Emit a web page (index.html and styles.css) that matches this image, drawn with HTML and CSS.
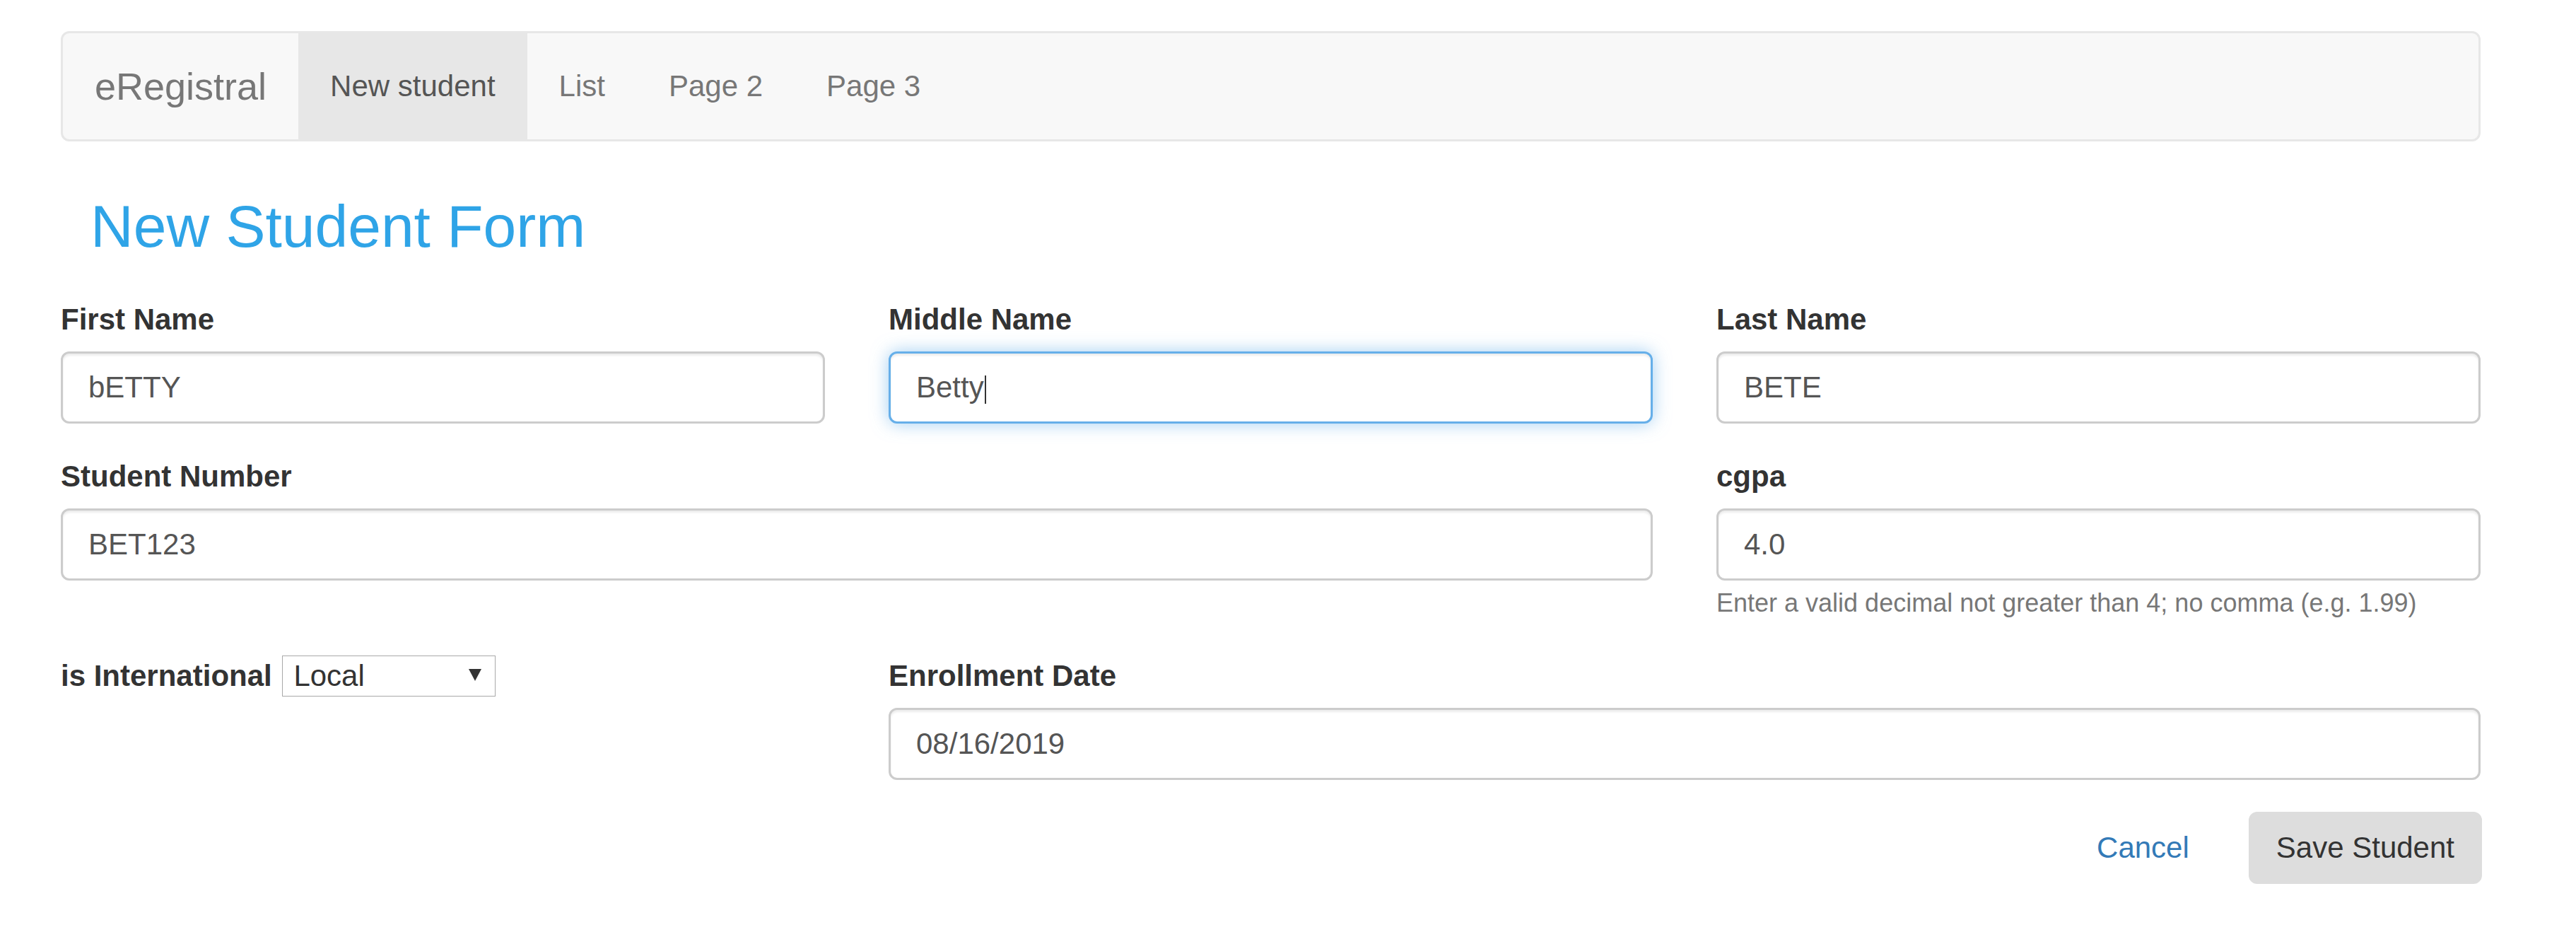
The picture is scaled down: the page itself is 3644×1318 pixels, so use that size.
FILE: index.html
```html
<!DOCTYPE html>
<html lang="en">
<head>
<meta charset="utf-8">
<title>eRegistral - New Student</title>
<link rel="stylesheet" href="styles.css">
</head>
<body>
<div class="container">
  <nav class="navbar">
    <a class="brand" href="#">eRegistral</a>
    <ul class="nav">
      <li class="active"><a href="#">New student</a></li>
      <li><a href="#">List</a></li>
      <li><a href="#">Page 2</a></li>
      <li><a href="#">Page 3</a></li>
    </ul>
  </nav>

  <h2 class="title">New Student Form</h2>

  <form class="form-grid">
    <div class="form-group">
      <label class="label">First Name</label>
      <input class="form-control" type="text" value="bETTY">
    </div>
    <div class="form-group">
      <label class="label">Middle Name</label>
      <div class="field-wrap">
        <input class="form-control is-focused" type="text" value="Betty">
        <span class="caret"></span>
      </div>
    </div>
    <div class="form-group">
      <label class="label">Last Name</label>
      <input class="form-control" type="text" value="BETE">
    </div>

    <div class="form-group span-2">
      <label class="label">Student Number</label>
      <input class="form-control" type="text" value="BET123">
    </div>
    <div class="form-group help-group">
      <label class="label">cgpa</label>
      <input class="form-control" type="text" value="4.0">
      <small class="help">Enter a valid decimal not greater than 4; no comma (e.g. 1.99)</small>
    </div>

    <div class="form-group">
      <label class="label">is International</label> <span class="select-wrap"><select class="select"><option>Local</option><option>International</option></select><span class="select-arrow"></span></span>
    </div>
    <div class="form-group span-2">
      <label class="label">Enrollment Date</label>
      <input class="form-control" type="text" value="08/16/2019">
    </div>

    <div class="actions">
      <a class="btn-link" href="#">Cancel</a>
      <button class="btn" type="button">Save Student</button>
    </div>
  </form>
</div>
</body>
</html>
```

FILE: styles.css
```css
* { box-sizing: border-box; }

html, body {
  margin: 0;
  padding: 0;
  background: #fff;
}

body {
  font-family: "Liberation Sans", Arial, Helvetica, sans-serif;
  font-size: 42px;
  line-height: 60px;
  color: #333;
}

.container {
  width: 3423px;
  margin: 0 0 0 86px;
  padding-top: 44px;
}

/* Navbar */
.navbar {
  display: flex;
  align-items: stretch;
  height: 156px;
  background: #f8f8f8;
  border: 3px solid #e7e7e7;
  border-radius: 12px;
}

.brand {
  display: block;
  padding: 45px 45px;
  font-size: 54px;
  line-height: 60px;
  color: #777;
  text-decoration: none;
}

.nav {
  display: flex;
  margin: 0;
  padding: 0;
  list-style: none;
}

.nav li a {
  display: block;
  padding: 45px 45px;
  line-height: 60px;
  font-size: 42px;
  color: #777;
  text-decoration: none;
}

.nav li.active a {
  background: #e7e7e7;
  color: #555;
}

/* Title */
.title {
  margin: 74px 0 56px;
  padding-left: 42px;
  font-size: 84px;
  line-height: 92px;
  font-weight: 400;
  color: #2fa4e7;
}

/* Form */
.form-grid {
  display: grid;
  grid-template-columns: repeat(3, 1fr);
  column-gap: 90px;
}

.span-2 { grid-column: span 2; }

.form-group {
  margin-bottom: 45px;
}

.help-group {
  margin-bottom: 43px;
}

.label {
  display: inline-block;
  margin-bottom: 15px;
  font-weight: 700;
  color: #333;
}

.form-control {
  display: block;
  width: 100%;
  height: 102px;
  padding: 18px 36px;
  font-family: inherit;
  font-size: 42px;
  line-height: 60px;
  color: #555;
  background: #fff;
  border: 3px solid #ccc;
  border-radius: 12px;
  box-shadow: inset 0 3px 3px rgba(0, 0, 0, 0.075);
  outline: none;
}

.form-control.is-focused {
  border-color: #66afe9;
  box-shadow: inset 0 3px 3px rgba(0, 0, 0, 0.075), 0 0 24px rgba(102, 175, 233, 0.6);
}

.field-wrap {
  position: relative;
}

.caret {
  position: absolute;
  left: 136px;
  top: 34px;
  width: 2px;
  height: 40px;
  background: #333;
}

.help {
  font-size: 36px;
  color: #777;
}

/* Select */
.select-wrap {
  position: relative;
  display: inline-block;
  vertical-align: baseline;
  margin-left: 3px;
}

.select {
  appearance: none;
  -webkit-appearance: none;
  width: 302px;
  height: 58px;
  padding: 0 60px 0 15px;
  font-family: inherit;
  font-size: 42px;
  line-height: 56px;
  color: #333;
  background: #fff;
  border: 1px solid #a9a9a9;
  border-radius: 0;
  vertical-align: baseline;
}

.select-arrow {
  position: absolute;
  right: 20px;
  top: 20px;
  width: 0;
  height: 0;
  border-left: 9px solid transparent;
  border-right: 9px solid transparent;
  border-top: 17px solid #333;
  pointer-events: none;
}

/* Actions */
.actions {
  grid-column: 1 / -1;
  display: flex;
  justify-content: flex-end;
  align-items: center;
  gap: 48px;
  margin-right: -2px;
}

.btn-link {
  padding: 21px 36px;
  font-size: 42px;
  line-height: 60px;
  color: #337ab7;
  text-decoration: none;
}

.btn {
  height: 102px;
  padding: 18px 36px;
  font-family: inherit;
  font-size: 42px;
  line-height: 60px;
  color: #333;
  background: #ddd;
  border: 3px solid #ddd;
  border-radius: 12px;
}
```
